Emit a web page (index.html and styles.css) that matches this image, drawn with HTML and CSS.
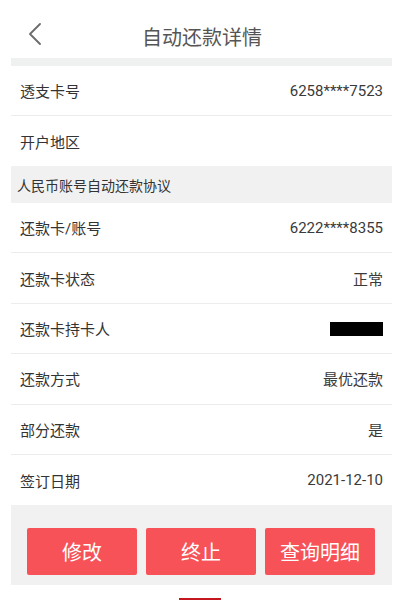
FILE: index.html
```html
<!DOCTYPE html>
<html lang="zh-CN">
<head>
<meta charset="utf-8">
<title>自动还款详情</title>
<link rel="stylesheet" href="styles.css">
</head>
<body>
<div class="page">
  <header class="nav">
    <span class="back">
      <svg width="14" height="22" viewBox="0 0 14 22"><path d="M12 1 L2 11 L12 21" fill="none" stroke="#6b6b6b" stroke-width="1.8" stroke-linecap="round" stroke-linejoin="round"/></svg>
    </span>
    <h1 class="title">自动还款详情</h1>
  </header>
  <main class="content">
    <div class="gap"></div>
    <div class="row"><span class="label">透支卡号</span><span class="value">6258****7523</span></div>
    <div class="row last"><span class="label">开户地区</span><span class="value"></span></div>
    <div class="section">人民币账号自动还款协议</div>
    <div class="row tall"><span class="label">还款卡/账号</span><span class="value">6222****8355</span></div>
    <div class="row tall"><span class="label">还款卡状态</span><span class="value">正常</span></div>
    <div class="row tall"><span class="label">还款卡持卡人</span><span class="value"><span class="mask"></span></span></div>
    <div class="row tall"><span class="label">还款方式</span><span class="value">最优还款</span></div>
    <div class="row tall"><span class="label">部分还款</span><span class="value">是</span></div>
    <div class="row tall last"><span class="label">签订日期</span><span class="value">2021-12-10</span></div>
    <div class="actions">
      <button class="btn">修改</button>
      <button class="btn">终止</button>
      <button class="btn">查询明细</button>
    </div>
  </main>
  <div class="tab"></div>
</div>
</body>
</html>
```
FILE: styles.css
```css
html, body {
  margin: 0;
  padding: 0;
  background: #ffffff;
}
body {
  font-family: Roboto, "Noto Sans CJK SC", "Noto Sans", sans-serif;
  color: #333333;
}
.page {
  width: 400px;
  height: 600px;
  overflow: hidden;
}
.nav {
  height: 58px;
  box-sizing: border-box;
  display: flex;
  align-items: center;
  justify-content: center;
  position: relative;
  padding-top: 14px;
}
.back {
  position: absolute;
  left: 28px;
  top: 23px;
  display: block;
  width: 14px;
  height: 22px;
}
.back svg { display: block; }
.title {
  margin: 0;
  font-size: 20px;
  font-weight: 400;
  color: #555555;
  padding-left: 4px;
}
.content {
  margin: 0 8px 0 11px;
}
.gap {
  height: 8px;
  background: #eff0f0;
}
.row {
  height: 50px;
  box-sizing: border-box;
  border-bottom: 1px solid #ececec;
  display: flex;
  align-items: center;
  justify-content: space-between;
  padding: 0 9px 0 9px;
  font-size: 15px;
}
.row.tall {
  height: 50.4px;
}
.row.last {
  border-bottom: none;
}
.label {
  color: #333333;
}
.value {
  color: #3a3a3a;
  display: flex;
  align-items: center;
}
.mask {
  display: block;
  width: 53px;
  height: 14px;
  background: #000000;
  margin-top: 1px;
}
.section {
  height: 37px;
  box-sizing: border-box;
  background: #f1f1f1;
  display: flex;
  align-items: center;
  padding-left: 6px;
  font-size: 14px;
  color: #333333;
}
.actions {
  background: #f1f1f1;
  height: 80px;
  box-sizing: border-box;
  padding: 23px 0 10px 16px;
  display: grid;
  grid-template-columns: 110px 110px 110px;
  column-gap: 9px;
}
.btn {
  border: none;
  border-radius: 2px;
  background: #f65258;
  color: #ffffff;
  font-family: Roboto, "Noto Sans CJK SC", sans-serif;
  font-size: 20px;
  height: 47px;
  padding: 0;
}
.tab {
  width: 42px;
  height: 4px;
  margin: 13px auto 0;
  background: #c3161f;
}
```
